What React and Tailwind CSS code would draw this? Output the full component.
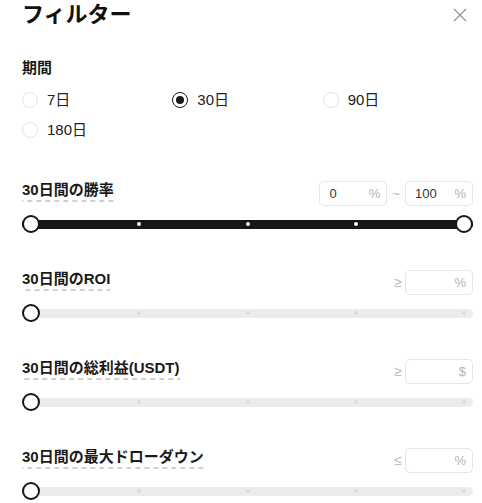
const font = { fontFamily: '"Liberation Sans", "Noto Sans CJK JP", sans-serif' };

const Radio = ({ checked, label }) => (
  <label className="flex h-[30px] items-center">
    {checked ? (
      <span className="flex h-4 w-4 items-center justify-center rounded-full border-[1.5px] border-[#1a1a1a]">
        <span className="h-2 w-2 rounded-full bg-[#1a1a1a]" />
      </span>
    ) : (
      <span className="h-4 w-4 rounded-full border border-[#e3e3e6]" />
    )}
    <span className="ml-[9px] text-[15px] text-[#222]">{label}</span>
  </label>
);

const Field = ({ value, unit, className = "" }) => (
  <div
    className={
      "flex h-[25px] w-[68px] items-center justify-between rounded-[5px] border border-[#e6e6e6] pl-[9px] pr-[6px] text-[13px] " +
      className
    }>
    <span className="text-[#333]">{value}</span>
    <span className="text-[#b4b4b4]">{unit}</span>
  </div>
);

const Slider = ({ full }) => {
  const marks = [0.25, 0.5, 0.75];
  return (
    <div className="relative mt-[9px] flex h-[18px] items-center">
      <div
        className={
          "relative h-[9px] w-full rounded-full " +
          (full ? "bg-[#161616]" : "bg-[#ececf0]")
        }>
        {marks.map((m) => (
          <span
            key={m}
            className={
              "absolute top-1/2 h-[4px] w-[4px] -translate-x-1/2 -translate-y-1/2 rounded-full " +
              (full ? "bg-white" : "bg-[#dcdce0]")
            }
            style={{ left: `calc(9px + (100% - 18px) * ${m})` }}
          />
        ))}
        {!full && (
          <span className="absolute right-[7px] top-1/2 h-[4px] w-[4px] -translate-y-1/2 rounded-full bg-[#dcdce0]" />
        )}
      </div>
      <span className="absolute left-0 top-0 h-[18px] w-[18px] rounded-full border-2 border-[#161616] bg-white" />
      {full && (
        <span className="absolute right-0 top-0 h-[18px] w-[18px] rounded-full border-2 border-[#161616] bg-white" />
      )}
    </div>
  );
};

// dashed underline drawn as a repeating gradient so the dashes are long like the original
const Label = ({ children }) => (
  <span className="bg-[linear-gradient(to_right,#cfcfcf_55%,transparent_0)] bg-[length:9px_2px] bg-bottom bg-repeat-x pb-[3px] text-[15px] font-bold leading-[18px] text-[#1a1a1a]">
    {children}
  </span>
);

const Section = ({ label, sign, unit, range, className = "" }) => (
  <div className={className}>
    <div className="flex h-[25px] items-start justify-between">
      <Label>{label}</Label>
      {range ? (
        <div className="flex items-center">
          <Field value="0" unit="%" />
          <span className="mx-[5px] text-[13px] text-[#b4b4b4]">~</span>
          <Field value="100" unit="%" />
        </div>
      ) : (
        <div className="flex items-center">
          <span className="mr-[3px] text-[14px] text-[#c0c0c0]">{sign}</span>
          <Field value="" unit={unit} />
        </div>
      )}
    </div>
    <Slider full={range} />
  </div>
);

export default function App() {
  return (
    <div className="h-[503px] w-[482px] overflow-hidden bg-white pl-[22px] pr-[9px]" style={font}>
      <div className="flex h-[30px] items-center justify-between">
        <h1 className="text-[22px] font-bold leading-[30px] text-[#111]">フィルター</h1>
        <svg width="14" height="14" viewBox="0 0 14 14" className="mr-[6px] -mt-[1px]">
          <path d="M1 1L13 13M13 1L1 13" stroke="#9a9a9a" strokeWidth="1.4" fill="none" />
        </svg>
      </div>

      <div className="mt-[28px] text-[15px] font-bold leading-[20px] text-[#1a1a1a]">期間</div>
      <div className="mt-[7px] grid grid-cols-3">
        <Radio label="7日" />
        <Radio label="30日" checked />
        <Radio label="90日" />
        <Radio label="180日" />
      </div>

      <Section className="mt-[36px]" label="30日間の勝率" range />
      <Section className="mt-[37px]" label="30日間のROI" sign="≥" unit="%" />
      <Section className="mt-[37px]" label="30日間の総利益(USDT)" sign="≥" unit="$" />
      <Section className="mt-[37px]" label="30日間の最大ドローダウン" sign="≤" unit="%" />
    </div>
  );
}
